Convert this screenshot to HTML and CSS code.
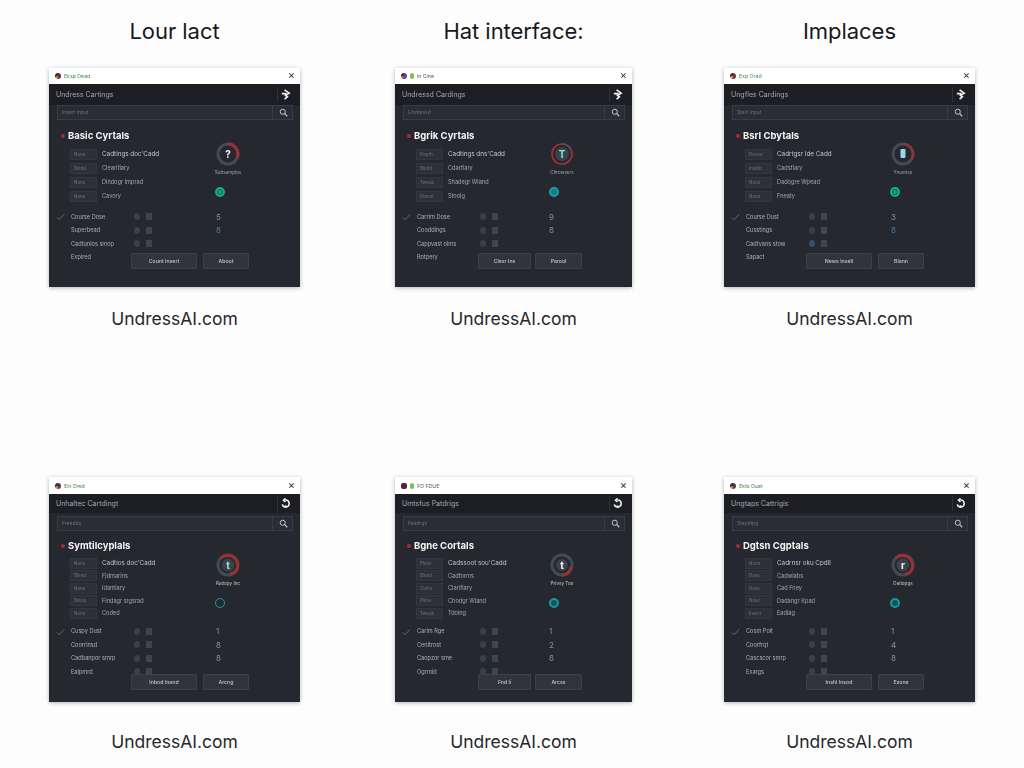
FILE: index.html
```html
<!DOCTYPE html>
<html lang="en">
<head>
<meta charset="utf-8">
<title>Interface sheet</title>
<link rel="stylesheet" href="styles.css">
</head>
<body>
<svg class="defs" width="0" height="0" aria-hidden="true">
  <symbol id="turn" viewBox="0 0 12 12"><path d="M5 1l5 3.5-4 2.5 2 1.5L5 11M2 5h5" fill="none" stroke="currentColor" stroke-width="1.8"/></symbol>
  <symbol id="loop" viewBox="0 0 12 12"><path d="M2.5 7A3.8 3.8 0 1 0 6 2.2M6 .5L3.8 2.4 6 4.2M6 8v3" fill="none" stroke="currentColor" stroke-width="1.7"/></symbol>
  <symbol id="find" viewBox="0 0 12 12"><circle cx="5" cy="5" r="3.4" fill="none" stroke="currentColor" stroke-width="1.3"/><path d="M7.6 7.6L11 11" stroke="currentColor" stroke-width="1.5"/></symbol>
  <symbol id="tick" viewBox="0 0 10 8"><path d="M1 4.5L3.5 7 9 1" fill="none" stroke="currentColor" stroke-width="1"/></symbol>
</svg>
<main class="sheet">

<figure class="panel wide">
  <h2 class="panel-title">Lour lact</h2>
  <section class="win">
    <div class="titlebar"><i class="logo logo-a"></i><span class="app">Eksp Dead</span><span class="close">×</span></div>
    <div class="head"><span>Undress Cartings</span><svg class="head-icon"><use href="#turn"/></svg></div>
    <div class="search"><span class="field">Insert input</span><span class="find"><svg><use href="#find"/></svg></span></div>
    <h3 class="section"><i></i>Basic Cyrtals</h3>
    <div class="controls">
      <div class="options">
        <div class="opt"><span class="chip">None</span><span class="lead">Cadtings doc'Cadd</span></div>
        <div class="opt"><span class="chip">Blend</span><span class="dim">Clearifiary</span></div>
        <div class="opt"><span class="chip">None</span><span class="dim">Dindogr Imprad</span></div>
        <div class="opt"><span class="chip">None</span><span class="dim">Cavory</span></div>
      </div>
      <div class="side">
        <svg class="ring" viewBox="0 0 24 24"><circle class="r-base" cx="12" cy="12" r="10"/><path class="r-red" d="M12 2a10 10 0 0 1 9 14"/><text class="r-white" x="12" y="16">?</text></svg>
        <span class="ring-label">Subsamples</span>
        <i class="dot green"></i>
      </div>
    </div>
    <ul class="list">
      <li><svg class="tick"><use href="#tick"/></svg><span class="name">Course Dose</span><i class="m c"></i><i class="m"></i><b>5</b></li>
      <li><span class="name">Superbead</span><i class="m c"></i><i class="m"></i><b class="blue">8</b></li>
      <li><span class="name">Cadtunlos smop</span><i class="m c"></i><i class="m"></i></li>
      <li><span class="name">Expired</span></li>
    </ul>
    <div class="actions"><button class="btn main">Count Insert</button><button class="btn alt">About</button></div>
  </section>
  <figcaption>UndressAI.com</figcaption>
</figure>

<figure class="panel narrow">
  <h2 class="panel-title">Hat interface:</h2>
  <section class="win">
    <div class="titlebar"><i class="logo logo-b"></i><i class="leaf"></i><span class="app plain">in Cine</span><span class="close">×</span></div>
    <div class="head"><span>Undressd Cardings</span><svg class="head-icon"><use href="#turn"/></svg></div>
    <div class="search"><span class="field">Undressd</span><span class="find"><svg><use href="#find"/></svg></span></div>
    <h3 class="section"><i></i>Bgrik Cyrtals</h3>
    <div class="controls">
      <div class="options">
        <div class="opt"><span class="chip">Depth</span><span class="lead">Cadtings dns'Cadd</span></div>
        <div class="opt"><span class="chip">Blend</span><span class="dim">Cdarfiary</span></div>
        <div class="opt"><span class="chip">Tweak</span><span class="dim">Shadegr Wland</span></div>
        <div class="opt"><span class="chip">Dense</span><span class="dim">Stoolg</span></div>
      </div>
      <div class="side">
        <svg class="ring" viewBox="0 0 24 24"><circle class="r-red-full" cx="12" cy="12" r="10"/><path class="r-base-arc" d="M12 2a10 10 0 0 1 9 6"/><circle class="r-core" cx="12" cy="12" r="7"/><text class="r-teal" x="12" y="16">T</text></svg>
        <span class="ring-label">Chrowsers</span>
        <i class="dot teal"></i>
      </div>
    </div>
    <ul class="list">
      <li><svg class="tick"><use href="#tick"/></svg><span class="name">Carrim Dose</span><i class="m c"></i><i class="m"></i><b>9</b></li>
      <li><span class="name">Cooddings</span><i class="m c"></i><i class="m"></i><b>8</b></li>
      <li><span class="name">Cappvast olms</span><i class="m c"></i><i class="m"></i></li>
      <li><span class="name">Rotpery</span></li>
    </ul>
    <div class="actions"><button class="btn main">Clesr Ins</button><button class="btn alt">Parool</button></div>
  </section>
  <figcaption>UndressAI.com</figcaption>
</figure>

<figure class="panel wide">
  <h2 class="panel-title">Implaces</h2>
  <section class="win">
    <div class="titlebar"><i class="logo logo-c"></i><span class="app">Exp Orad</span><span class="close">×</span></div>
    <div class="head"><span>Ungfles Cardings</span><svg class="head-icon"><use href="#turn"/></svg></div>
    <div class="search"><span class="field">Start input</span><span class="find"><svg><use href="#find"/></svg></span></div>
    <h3 class="section"><i></i>Bsrl Cbytals</h3>
    <div class="controls">
      <div class="options">
        <div class="opt"><span class="chip">Dense</span><span class="lead">Cadrtgsr Ide Cadd</span></div>
        <div class="opt"><span class="chip">Inside</span><span class="dim">Cadsfiary</span></div>
        <div class="opt"><span class="chip">None</span><span class="dim">Dadogre Wpead</span></div>
        <div class="opt"><span class="chip">None</span><span class="dim">Fneaty</span></div>
      </div>
      <div class="side">
        <svg class="ring" viewBox="0 0 24 24"><circle class="r-base" cx="12" cy="12" r="10"/><path class="r-red thin" d="M12 2a10 10 0 0 1 8 16"/><rect x="9.5" y="7" width="5" height="9" rx="1" fill="#9fd4e8"/></svg>
        <span class="ring-label">Ynuense</span>
        <i class="dot green"></i>
      </div>
    </div>
    <ul class="list">
      <li><svg class="tick"><use href="#tick"/></svg><span class="name">Course Dust</span><i class="m c"></i><i class="m"></i><b>3</b></li>
      <li><span class="name">Cusstings</span><i class="m c"></i><i class="m"></i><b class="blue">8</b></li>
      <li><span class="name">Cadtvaos stow</span><i class="m c blue-m"></i><i class="m"></i></li>
      <li><span class="name">Sapact</span></li>
    </ul>
    <div class="actions"><button class="btn main">News Insell</button><button class="btn alt">Blann</button></div>
  </section>
  <figcaption>UndressAI.com</figcaption>
</figure>

<figure class="panel wide tall">
  <section class="win">
    <div class="titlebar"><i class="logo logo-a"></i><span class="app">Ein Dred</span><span class="close">×</span></div>
    <div class="head"><span>Unhaltec Cartdingt</span><svg class="head-icon"><use href="#loop"/></svg></div>
    <div class="search"><span class="field">Freedds</span><span class="find"><svg><use href="#find"/></svg></span></div>
    <h3 class="section"><i></i>Symtilcyplals</h3>
    <div class="controls">
      <div class="options">
        <div class="opt"><span class="chip">None</span><span class="lead">Cadtios doc'Cadd</span></div>
        <div class="opt"><span class="chip">Blend</span><span class="dim">Fjdmarins</span></div>
        <div class="opt"><span class="chip">None</span><span class="dim">Idantiary</span></div>
        <div class="opt"><span class="chip">Steop</span><span class="dim">Findagr srgsrad</span></div>
        <div class="opt"><span class="chip">None</span><span class="dim">Coded</span></div>
      </div>
      <div class="side">
        <svg class="ring" viewBox="0 0 24 24"><circle class="r-base" cx="12" cy="12" r="10"/><path class="r-red" d="M5 5a10 10 0 0 1 15 13 10 10 0 0 1-6 3"/><circle class="r-core" cx="12" cy="12" r="6.5"/><text class="r-teal" x="12" y="16">t</text></svg>
        <span class="ring-label bright">Ratiopy Inc</span>
        <i class="dot outline"></i>
      </div>
    </div>
    <ul class="list">
      <li><svg class="tick"><use href="#tick"/></svg><span class="name">Cuspy Dust</span><i class="m c"></i><i class="m"></i><b>1</b></li>
      <li><span class="name">Coorrinsd</span><i class="m c"></i><i class="m"></i><b>8</b></li>
      <li><span class="name">Cadbanpor smrp</span><i class="m c"></i><i class="m"></i><b>8</b></li>
      <li><span class="name">Ealpmrd</span><i class="m c"></i><i class="m"></i></li>
    </ul>
    <div class="actions"><button class="btn main">Inbod Inand</button><button class="btn alt">Arcng</button></div>
  </section>
  <figcaption>UndressAI.com</figcaption>
</figure>

<figure class="panel narrow tall">
  <section class="win">
    <div class="titlebar"><i class="logo logo-d"></i><i class="leaf"></i><span class="app plain">FO FDUE</span><span class="close">×</span></div>
    <div class="head"><span>Umtsfus Patdrigs</span><svg class="head-icon"><use href="#loop"/></svg></div>
    <div class="search"><span class="field">Fesdrgs</span><span class="find"><svg><use href="#find"/></svg></span></div>
    <h3 class="section"><i></i>Bgne Cortals</h3>
    <div class="controls">
      <div class="options">
        <div class="opt"><span class="chip">Pless</span><span class="lead">Cadssoot sou'Cadd</span></div>
        <div class="opt"><span class="chip">Blend</span><span class="dim">Cadforms</span></div>
        <div class="opt"><span class="chip">Coins</span><span class="dim">Clarifiary</span></div>
        <div class="opt"><span class="chip">Pless</span><span class="dim">Chodgr Wland</span></div>
        <div class="opt"><span class="chip">Tweak</span><span class="dim">Tdoing</span></div>
      </div>
      <div class="side">
        <svg class="ring" viewBox="0 0 24 24"><circle class="r-base" cx="12" cy="12" r="10"/><path class="r-red" d="M21 14a10 10 0 0 1-9 8"/><circle class="r-core" cx="12" cy="12" r="6"/><text class="r-white" x="12" y="16">t</text></svg>
        <span class="ring-label bright">Privsy Toe</span>
        <i class="dot outline-fill"></i>
      </div>
    </div>
    <ul class="list">
      <li><svg class="tick"><use href="#tick"/></svg><span class="name">Carim Rge</span><i class="m c"></i><i class="m"></i><b>1</b></li>
      <li><span class="name">Cenitrost</span><i class="m c"></i><i class="m"></i><b>2</b></li>
      <li><span class="name">Caopzor sme</span><i class="m c"></i><i class="m"></i><b>8</b></li>
      <li><span class="name">Ogrmid</span><i class="m c"></i><i class="m"></i></li>
    </ul>
    <div class="actions"><button class="btn main">Fnd li</button><button class="btn alt">Arcss</button></div>
  </section>
  <figcaption>UndressAI.com</figcaption>
</figure>

<figure class="panel wide tall">
  <section class="win">
    <div class="titlebar"><i class="logo logo-a"></i><span class="app">Ekts Ouat</span><span class="close">×</span></div>
    <div class="head"><span>Ungtaps Cattrigis</span><svg class="head-icon"><use href="#loop"/></svg></div>
    <div class="search"><span class="field">Staydtpg</span><span class="find"><svg><use href="#find"/></svg></span></div>
    <h3 class="section"><i></i>Dgtsn Cgptals</h3>
    <div class="controls">
      <div class="options">
        <div class="opt"><span class="chip">None</span><span class="lead">Cadrnsr oku Cpdll</span></div>
        <div class="opt"><span class="chip">Dose</span><span class="dim">Cadwiabs</span></div>
        <div class="opt"><span class="chip">Dose</span><span class="dim">Cad Fney</span></div>
        <div class="opt"><span class="chip">Nose</span><span class="dim">Dadangr Kpad</span></div>
        <div class="opt"><span class="chip">Insert</span><span class="dim">Eadiag</span></div>
      </div>
      <div class="side">
        <svg class="ring" viewBox="0 0 24 24"><circle class="r-base" cx="12" cy="12" r="10"/><path class="r-red" d="M5 5a10 10 0 0 1 15 13 10 10 0 0 1-6 3"/><circle class="r-core" cx="12" cy="12" r="6.5"/><text class="r-white" x="12" y="16">r</text></svg>
        <span class="ring-label bright">Datiopgs</span>
        <i class="dot outline-fill"></i>
      </div>
    </div>
    <ul class="list">
      <li><svg class="tick"><use href="#tick"/></svg><span class="name">Cosm Poit</span><i class="m c"></i><i class="m"></i><b>1</b></li>
      <li><span class="name">Coorfrqt</span><i class="m c"></i><i class="m"></i><b>4</b></li>
      <li><span class="name">Cascscor smrp</span><i class="m c"></i><i class="m"></i><b>8</b></li>
      <li><span class="name">Exargs</span><i class="m c"></i><i class="m"></i></li>
    </ul>
    <div class="actions"><button class="btn main">Inshl Insod</button><button class="btn alt">Ezone</button></div>
  </section>
  <figcaption>UndressAI.com</figcaption>
</figure>

</main>
</body>
</html>
```

FILE: styles.css
```css
* { box-sizing: border-box; }
html, body { margin: 0; height: 100%; }
body { background: #fdfdfd; color: #1d1f22; font-family: Inter, "Liberation Sans", sans-serif; overflow: hidden; }
.defs { display: block; height: 0; }

.sheet {
  display: grid;
  grid-template-columns: 346px 329px 300px;
  row-gap: 148px;
  padding: 18px 0 0 49px;
}
.panel { margin: 0; width: 251px; text-align: center; }
.panel.narrow { width: 237px; }
.panel-title { margin: 0 0 24px; font-size: 22px; line-height: 26px; font-weight: 400; color: #17191c; letter-spacing: -.05px; }
.panel figcaption { margin-top: 22px; font-size: 17.5px; line-height: 20px; font-weight: 400; color: #26282b; }
.panel.tall figcaption { margin-top: 30px; }

.win {
  --extra: 58px;
  --main-w: 66px;
  --alt-w: 46px;
  --side-right: 50px;
  height: 219px;
  background: #25282e;
  color: #b4b7bd;
  text-align: left;
  font-size: 7px;
  line-height: 10px;
  box-shadow: 0 1px 4px rgba(40, 50, 70, .35);
  filter: blur(.55px);
}
.narrow .win { --extra: 45px; --main-w: 53px; --alt-w: 47px; --side-right: 48px; }
.tall .win { height: 225px; }

.titlebar {
  height: 16px;
  display: flex;
  align-items: center;
  gap: 3px;
  padding: 0 5px 0 6px;
  background: #fff;
  color: #444;
  font-size: 5.2px;
}
.tall .titlebar { height: 17px; }
.logo { width: 6px; height: 6px; border-radius: 50%; }
.logo-a { background: conic-gradient(#5b3550 0 50%, #e07a3a 50% 70%, #2c2c38 70%); }
.logo-b { background: conic-gradient(#6a3fa0 0 60%, #d06a3a 60% 75%, #2a2a4a 75%); }
.logo-c { background: conic-gradient(#7a3040 0 55%, #d8a040 55% 70%, #303038 70%); }
.logo-d { background: #5a2038; border-radius: 2px; }
.leaf { width: 4px; height: 6px; border-radius: 2px; background: #7cc24a; }
.app { color: #3f8a4f; }
.app.plain { color: #555; }
.close { margin: -2px 0 0 auto; font-size: 11px; color: #333; line-height: 10px; }

.head {
  height: 21px;
  display: flex;
  align-items: center;
  justify-content: space-between;
  padding: 0 9px 0 7px;
  background: #1c1e23;
  font-size: 7px;
  color: #a3a6ac;
}
.tall .head { height: 19px; }
.head-icon { box-sizing: content-box; width: 11px; height: 11px; padding: 2px 0 2px 2px; border-left: 1px solid #30333a; color: #f0f0f0; }

.search {
  height: 15px;
  display: flex;
  gap: 1px;
  margin: 0 7px 0 8px;
  border: 1px solid #383c44;
  background: #2a2d33;
  font-size: 5px;
}
.tall .search { margin-top: 3px; }
.field { flex: 1; padding-left: 4px; line-height: 13px; color: #6d7178; border-right: 1px solid #383c44; }
.find { width: 18px; display: flex; align-items: center; justify-content: center; color: #c8cad0; }
.find svg { width: 9px; height: 9px; }

.section {
  display: flex;
  align-items: center;
  gap: 3px;
  height: 12px;
  margin: 10px 0 0 12px;
  font-size: 9.5px;
  line-height: 12px;
  font-weight: 700;
  color: #f4f4f4;
}
.tall .section { margin-top: 9px; }
.section i { width: 4px; height: 4px; border-radius: 50%; background: #a52b34; }

.controls { display: flex; justify-content: space-between; margin-top: 5px; padding: 0 var(--side-right) 0 21px; }
.opt { height: 14px; display: flex; align-items: center; gap: 5px; color: #c4c7cc; }
.tall .opt { height: 12.5px; }
.lead { font-size: 6.3px; white-space: nowrap; }
.dim { color: #a4a7ad; font-size: 5.6px; white-space: nowrap; }
.chip {
  width: 27px;
  height: 11px;
  padding-left: 3px;
  font-size: 4.5px;
  line-height: 9px;
  color: #70747b;
  background: #2d3037;
  border: 1px solid #33363e;
}

.side { width: 44px; margin-top: -5px; display: flex; flex-direction: column; align-items: center; }
.tall .side { margin-top: -4px; }
.ring { width: 24px; height: 24px; }
.ring circle, .ring path { fill: none; }
.r-base { stroke: #434a52; stroke-width: 3; }
.r-red { stroke: #9e2f30; stroke-width: 3; }
.r-red.thin { stroke-width: 2; }
.r-red-full { stroke: #a83034; stroke-width: 1.6; }
.r-base-arc { stroke: #4a5158; stroke-width: 2; }
.ring .r-core { fill: #3a424a; stroke: none; }
.ring text { font: 700 10px Inter, "Liberation Sans", sans-serif; text-anchor: middle; }
.r-white { fill: #f2f4f6; }
.r-teal { fill: #8fe0dc; }
.ring-label { margin-top: 3px; font-size: 4.6px; line-height: 8px; color: #a0a3a8; white-space: nowrap; }
.ring-label.bright { color: #c6c8cc; }
.dot { width: 10px; height: 10px; margin: 10px 16px 0 0; border-radius: 50%; box-sizing: border-box; }
.dot.green { background: #19a07c; border: 2px solid #14b08a; box-shadow: inset 0 0 0 1px #0e5e50; }
.dot.teal { background: #127c80; border: 2px solid #15a0a4; }
.dot.outline { border: 1.5px solid #1c9a9a; }
.dot.outline-fill { background: #10555a; border: 2px solid #169a9c; }

.list { margin: 7px 0 0; padding: 0 0 0 7px; list-style: none; }
.tall .list { margin-top: 5px; }
.list li { height: 13.5px; display: flex; align-items: center; padding-left: 15px; position: relative; color: #aeb1b6; }
.tick { position: absolute; left: 0; top: 3px; width: 9px; height: 8px; color: #6a7078; }
.name { width: 63px; font-size: 5.6px; white-space: nowrap; overflow: hidden; }
.m { width: 6px; height: 7px; margin-right: 6px; background: #3f454d; }
.m.c { border-radius: 50%; background: #3a4048; }
.m.blue-m { background: #3a5068; }
.list b { margin-left: var(--extra); font-size: 8px; font-weight: 400; color: #8c9096; }
.list b.blue { color: #4f7fa8; }

.actions { display: flex; gap: 6px; margin: -11px 0 0 82px; }
.narrow .actions { gap: 4px; margin-left: 83px; }
.tall .actions { margin-top: -5px; }
.btn {
  height: 16px;
  padding: 0;
  font: 500 5.2px/14px Inter, "Liberation Sans", sans-serif;
  color: #c4c6cb;
  background: #31343b;
  border: 1px solid #3c4048;
  border-radius: 1px;
}
.main { width: var(--main-w); }
.alt { width: var(--alt-w); }
```
